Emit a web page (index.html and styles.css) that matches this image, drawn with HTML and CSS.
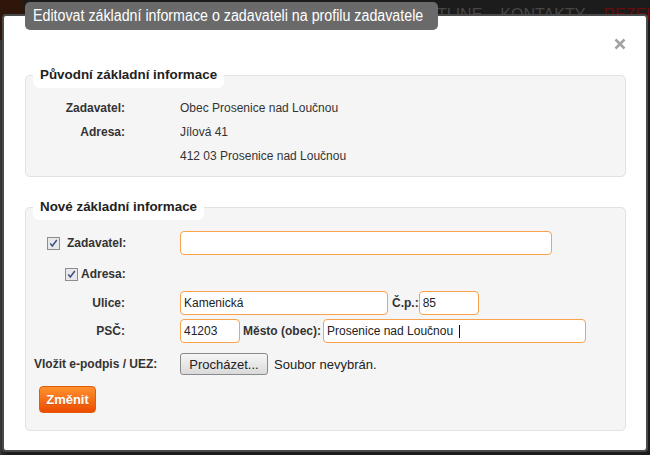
FILE: index.html
```html
<!DOCTYPE html>
<html>
<head>
    <link rel="stylesheet" href="styles.css">
</head>
<body>
    <div class="backdrop">
        <div class="topnav">
            <span>HOTLINE</span>
            <span>KONTAKTY</span>
            <span class="nav-red">REZERVACE</span>
        </div>
    </div>

    <div class="dialog">
        <div class="dialog-title"><span class="title-text">Editovat základní informace o zadavateli na profilu zadavatele</span></div>
        <a class="dialog-close" href="#">
            <svg width="12" height="12" viewBox="0 0 12 12"><path d="M1.5 1.5L10.5 10.5M10.5 1.5L1.5 10.5" stroke="#a3a3a3" stroke-width="2.6"/></svg>
        </a>

        <fieldset class="box box-old">
            <legend>Původní základní informace</legend>
            <div class="row">
                <div class="lbl">Zadavatel:</div>
                <div class="val">Obec Prosenice nad Loučnou</div>
            </div>
            <div class="row">
                <div class="lbl">Adresa:</div>
                <div class="val">Jílová 41</div>
            </div>
            <div class="row">
                <div class="lbl"></div>
                <div class="val">412 03 Prosenice nad Loučnou</div>
            </div>
        </fieldset>

        <fieldset class="box box-new">
            <legend>Nové základní informace</legend>
            <div class="row row-check1">
                <label class="check-lbl check-lbl-1">
                    <svg class="cb" width="13" height="13" viewBox="0 0 13 13"><rect x="0.5" y="0.5" width="12" height="12" fill="#e8e8e8" stroke="#8c8c8c"/><path d="M3.2 6.4l2.1 2.6L9.8 3" fill="none" stroke="#3d4f88" stroke-width="1.5"/></svg>
                    Zadavatel:
                </label>
                <input class="inp inp-name" type="text" value="">
            </div>
            <div class="row row-check2">
                <label class="check-lbl check-lbl-2">
                    <svg class="cb" width="13" height="13" viewBox="0 0 13 13"><rect x="0.5" y="0.5" width="12" height="12" fill="#e8e8e8" stroke="#8c8c8c"/><path d="M3.2 6.4l2.1 2.6L9.8 3" fill="none" stroke="#3d4f88" stroke-width="1.5"/></svg>
                    Adresa:
                </label>
            </div>
            <div class="row row-street">
                <div class="lbl">Ulice:</div>
                <input class="inp inp-street" type="text" value="Kamenická">
                <span class="inl inl-cp">Č.p.:</span>
                <input class="inp inp-short" type="text" value="85">
            </div>
            <div class="row row-psc">
                <div class="lbl">PSČ:</div>
                <input class="inp inp-short" type="text" value="41203">
                <span class="inl inl-city">Město (obec):</span>
                <span class="focused">
                    <input class="inp inp-city" type="text" value="Prosenice nad Loučnou">
                </span>
            </div>
            <div class="row row-file">
                <div class="file-lbl">Vložit e-podpis / UEZ:</div>
                <button class="file-btn" type="button">Procházet...</button>
                <span class="file-name">Soubor nevybrán.</span>
            </div>
            <button class="btn-submit" type="button">Změnit</button>
        </fieldset>
    </div>
</body>
</html>
```

FILE: styles.css
```css
body {
    margin: 0;
    width: 650px;
    height: 455px;
    overflow: hidden;
    position: relative;
    background-color: #1c1c1c;
    font-family: "Liberation Sans", Arial, sans-serif;
    font-size: 12px;
    color: #333;
}
.backdrop {
    height: 455px;
    background: linear-gradient(to right, #3a3a3a 0, #262626 3px, #1c1c1c 8px);
}
.topnav {
    display: flex;
    gap: 18px;
    height: 40px;
    padding: 6px 0 0 413px;
    box-sizing: border-box;
    overflow: hidden;
    font-size: 16px;
    color: #474747;
    white-space: nowrap;
    background: linear-gradient(to right, #2e160a 0, #2e160a 20px, #1c1c1c 30px);
}
.nav-red {
    color: #6a0b0b;
}
.dialog {
    position: absolute;
    left: 2px;
    top: 14px;
    width: 646px;
    height: 438px;
    box-sizing: border-box;
    border: 2px solid #4a4a4a;
    border-radius: 4px;
    background-color: #fff;
    padding: 46px 20px 0 21px;
}
.dialog-title {
    position: absolute;
    left: 21px;
    top: -14px;
    width: 413px;
    height: 28px;
    box-sizing: border-box;
    line-height: 28px;
    padding: 0 8px;
    background-color: #6a6a6a;
    color: #fff;
    border-radius: 5px;
    white-space: nowrap;
    overflow: hidden;
}
.title-text {
    display: inline-block;
    font-size: 16px;
    transform: scaleX(0.89);
    transform-origin: left center;
}
.dialog-close {
    position: absolute;
    left: 610px;
    top: 22px;
    width: 12px;
    height: 12px;
    display: block;
}
.dialog-close svg {
    display: block;
}
.box {
    margin: 0;
    padding: 8px;
    border: 1px solid #e2e2e2;
    border-radius: 5px;
    background-color: #f5f5f5;
    min-width: 0;
}
.box legend {
    height: 26px;
    line-height: 26px;
    padding: 0 7px;
    margin-left: -1px;
    background-color: #fff;
    border-radius: 6px;
    font-size: 13.4px;
    font-weight: bold;
    color: #222;
}
.box-new {
    margin-top: 17px;
    padding-top: 11px;
    padding-bottom: 17px;
}
.row {
    display: flex;
    align-items: center;
    height: 24px;
}
.lbl {
    width: 91px;
    margin-right: 55px;
    flex-shrink: 0;
    text-align: right;
    font-weight: bold;
}
.row-check1 {
    margin-bottom: 7px;
}
.row-check2 {
    margin-bottom: 5px;
}
.row-street {
    margin-bottom: 4px;
}
.row-psc {
    margin-bottom: 10px;
}
.row-file {
    height: 22px;
    margin-bottom: 11px;
}
.check-lbl {
    display: flex;
    align-items: center;
    width: 146px;
    flex-shrink: 0;
    box-sizing: border-box;
    font-weight: bold;
}
.check-lbl-1 {
    padding-left: 13px;
    gap: 7px;
}
.check-lbl-2 {
    padding-left: 31px;
    gap: 3px;
}
.cb {
    display: block;
    flex-shrink: 0;
}
.inp {
    height: 24px;
    box-sizing: border-box;
    border: 1px solid #f8a24c;
    border-radius: 4px;
    padding: 0 3px;
    margin: 0;
    background-color: #fff;
    font-family: "Liberation Sans", Arial, sans-serif;
    font-size: 12px;
    color: #222;
    outline: none;
}
.inp-name {
    width: 372px;
}
.inp-street {
    width: 208px;
}
.inp-short {
    width: 60px;
}
.inp-city {
    width: 263px;
}
.inl {
    font-weight: bold;
    white-space: nowrap;
}
.inl-cp {
    margin: 0 0 0 4px;
}
.inl-city {
    margin: 0 2px 0 3px;
}
.focused {
    position: relative;
    display: block;
}
.focused::after {
    content: "";
    position: absolute;
    left: 136px;
    top: 6px;
    width: 1px;
    height: 13px;
    background-color: #111;
}
.file-lbl {
    width: 146px;
    flex-shrink: 0;
    font-weight: bold;
}
.file-btn {
    width: 88px;
    height: 22px;
    padding: 0;
    border: 1px solid #8a8a8a;
    border-radius: 3px;
    background: linear-gradient(#f6f6f6, #dadada);
    font-family: "Liberation Sans", Arial, sans-serif;
    font-size: 13px;
    color: #222;
}
.file-name {
    margin-left: 6px;
    font-size: 13px;
    color: #222;
}
.btn-submit {
    display: block;
    margin-left: 5px;
    width: 57px;
    height: 27px;
    padding: 0;
    border: 1px solid #e35a0c;
    border-radius: 4px;
    background: linear-gradient(#ff922f, #ec4c00);
    color: #fff;
    font-family: "Liberation Sans", Arial, sans-serif;
    font-size: 13px;
    font-weight: bold;
    text-shadow: 0 1px 0 rgba(0,0,0,0.15);
}
```
